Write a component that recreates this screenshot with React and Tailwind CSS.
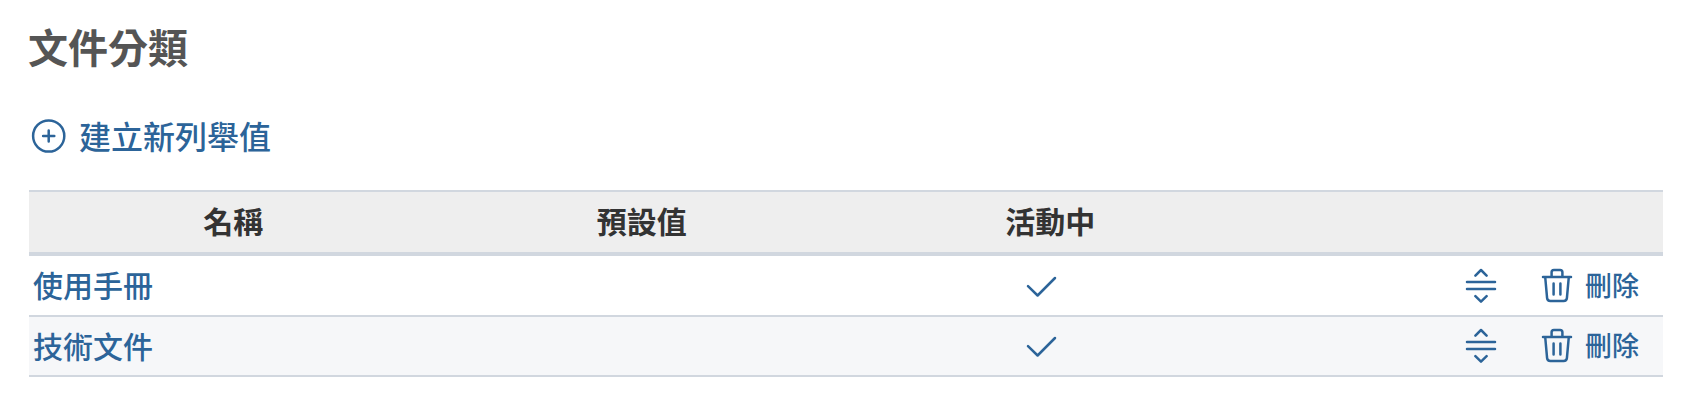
const rows = ['使用手冊', '技術文件']

function Icon({ children }) {
  return (
    <svg
      viewBox="0 0 36 36"
      className="h-9 w-9 shrink-0"
      fill="none"
      stroke="currentColor"
      strokeWidth="2.5"
      strokeLinecap="round"
      strokeLinejoin="round"
      aria-hidden="true"
    >
      {children}
    </svg>
  )
}

function AddIcon() {
  return (
    <Icon>
      <circle cx="17.7" cy="19" r="15.6" />
      <path d="M17.7 13.4v11.2M12.1 19h11.2" />
    </Icon>
  )
}

function CheckIcon() {
  return (
    <Icon>
      <path d="M4 19.1l9.6 9.4L31 11" />
    </Icon>
  )
}

function SortIcon() {
  return (
    <Icon>
      <path d="M4 15h28M4 22h28M12.4 8.6L18 3l5.6 5.6M12.4 29.2L18 34.6l5.6-5.4" />
    </Icon>
  )
}

function TrashIcon() {
  return (
    <Icon>
      <path d="M4 10h28M12.6 10V5.3q0-2.3 2.3-2.3h6.2q2.3 0 2.3 2.3v4.7M6.2 10l1.9 21.1q.3 2.9 3.3 2.9h13.2q3 0 3.3-2.9l1.9-21.1M14.6 16.5v11M21.4 16.5v11" />
    </Icon>
  )
}

export default function App() {
  return (
    <main className="bg-white px-7 pt-[18px] font-['Noto_Sans_CJK_TC',sans-serif] text-[30px] font-medium text-[#2c6499]">
      <h1 className="text-[40px] leading-[56px] font-bold text-[#555555]">文件分類</h1>
      <a href="#new" className="mt-[37px] flex w-fit items-center gap-3 pl-[3px] text-[32px] leading-12">
        <AddIcon />
        建立新列舉值
      </a>
      <div className="-mr-px pt-[31px] pl-px">
        <table className="w-full table-fixed border-separate border-spacing-0">
          <thead>
            <tr className="bg-[#eeeeee] leading-[56px] text-[#333333]">
              <th scope="col" className="border-t-2 border-b-4 border-[#d1d7df] px-0 pt-0 pb-1 font-bold">名稱</th>
              <th scope="col" className="border-t-2 border-b-4 border-[#d1d7df] px-0 pt-0 pb-1 font-bold">預設值</th>
              <th scope="col" className="border-t-2 border-b-4 border-[#d1d7df] px-0 pt-0 pb-1 font-bold">活動中</th>
              <td className="border-t-2 border-b-4 border-[#d1d7df] p-0" />
            </tr>
          </thead>
          <tbody>
            {rows.map((name) => (
              <tr key={name} className="leading-[56px] first:leading-[57px] even:bg-[#f6f7f9]">
                <td className="border-b-2 border-[#d1d7df] px-1 pt-0 pb-0.5">
                  <a href="#edit">{name}</a>
                </td>
                <td className="border-b-2 border-[#d1d7df] p-0" />
                <td className="border-b-2 border-[#d1d7df] pt-0 pr-4 pb-0.5 pl-0">
                  <div className="flex justify-center" role="img" aria-label="活動中">
                    <CheckIcon />
                  </div>
                </td>
                <td className="border-b-2 border-[#d1d7df] pt-0 pr-6 pb-0.5 pl-0">
                  <div className="flex items-center justify-end gap-10">
                    <button type="button" aria-label="排序" className="cursor-move">
                      <SortIcon />
                    </button>
                    <button type="button" className="flex items-center gap-2.5 text-[27px]">
                      <TrashIcon />
                      刪除
                    </button>
                  </div>
                </td>
              </tr>
            ))}
          </tbody>
        </table>
      </div>
    </main>
  )
}
